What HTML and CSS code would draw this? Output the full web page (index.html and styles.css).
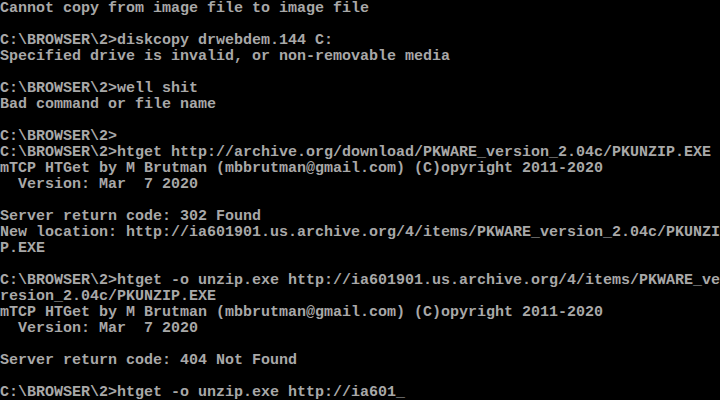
FILE: index.html
```html
<!DOCTYPE html>
<html>
<head>
<meta charset="utf-8">
<link rel="stylesheet" href="styles.css">
</head>
<body>
<pre class="screen">Cannot copy from image file to image file

C:\BROWSER\2&gt;diskcopy drwebdem.144 C:
Specified drive is invalid, or non-removable media

C:\BROWSER\2&gt;well shit
Bad command or file name

C:\BROWSER\2&gt;
C:\BROWSER\2&gt;htget http://archive.org/download/PKWARE_version_2.04c/PKUNZIP.EXE
mTCP HTGet by M Brutman (mbbrutman@gmail.com) (C)opyright 2011-2020
  Version: Mar  7 2020

Server return code: 302 Found
New location: http://ia601901.us.archive.org/4/items/PKWARE_version_2.04c/PKUNZI
P.EXE

C:\BROWSER\2&gt;htget -o unzip.exe http://ia601901.us.archive.org/4/items/PKWARE_ve
resion_2.04c/PKUNZIP.EXE
mTCP HTGet by M Brutman (mbbrutman@gmail.com) (C)opyright 2011-2020
  Version: Mar  7 2020

Server return code: 404 Not Found

C:\BROWSER\2&gt;htget -o unzip.exe http://ia601_</pre>
</body>
</html>
```

FILE: styles.css
```css
html, body {
  margin: 0;
  padding: 0;
  background: #000;
  width: 720px;
  height: 400px;
  overflow: hidden;
}
.screen {
  margin: 0;
  padding: 1px 0 0 0;
  font-family: "Liberation Mono", "DejaVu Sans Mono", monospace;
  font-size: 15px;
  line-height: 16px;
  font-weight: bold;
  color: #a8a8a8;
  white-space: pre;
}
```
